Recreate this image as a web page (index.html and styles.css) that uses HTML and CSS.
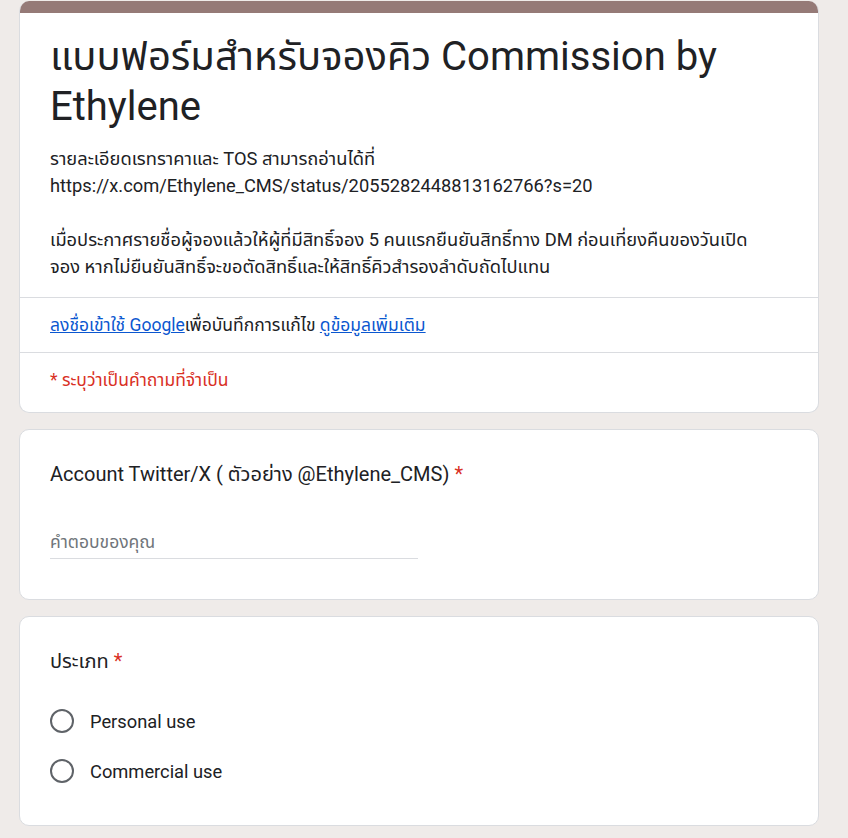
FILE: index.html
```html
<!DOCTYPE html>
<html lang="th">
<head>
  <meta charset="UTF-8" />
  <meta name="viewport" content="width=device-width, initial-scale=1.0"/>
  <title>แบบฟอร์มสำหรับจองคิว Commission by Ethylene</title>
  <link rel="stylesheet" href="styles.css">
</head>
<body>
  <div class="form">
    <div class="card header-card">
      <div class="header-bar"></div>
      <div class="header-main">
        <h1 class="form-title">แบบฟอร์มสำหรับจองคิว Commission by Ethylene</h1>
        <div class="form-desc">
          รายละเอียดเรทราคาและ TOS สามารถอ่านได้ที่<br>
          https://x.com/Ethylene_CMS/status/2055282448813162766?s=20<br>
          <br>
          เมื่อประกาศรายชื่อผู้จองแล้วให้ผู้ที่มีสิทธิ์จอง 5 คนแรกยืนยันสิทธิ์ทาง DM ก่อนเที่ยงคืนของวันเปิด<br>จอง หากไม่ยืนยันสิทธิ์จะขอตัดสิทธิ์และให้สิทธิ์คิวสำรองลำดับถัดไปแทน
        </div>
      </div>
      <div class="header-row signin-row">
        <a href="#">ลงชื่อเข้าใช้ Google</a>เพื่อบันทึกการแก้ไข <a href="#">ดูข้อมูลเพิ่มเติม</a>
      </div>
      <div class="header-row required-row">* ระบุว่าเป็นคำถามที่จำเป็น</div>
    </div>

    <div class="card question-card">
      <div class="question-title">Account Twitter/X ( ตัวอย่าง @Ethylene_CMS) <span class="star">*</span></div>
      <input class="answer-input" type="text" placeholder="คำตอบของคุณ">
    </div>

    <div class="card question-card">
      <div class="question-title">ประเภท <span class="star">*</span></div>
      <div class="options">
        <label class="option">
          <span class="radio"></span>
          <span class="option-label">Personal use</span>
        </label>
        <label class="option">
          <span class="radio"></span>
          <span class="option-label">Commercial use</span>
        </label>
      </div>
    </div>
  </div>
</body>
</html>
```

FILE: styles.css
```css
body {
  margin: 0;
  background-color: #efebe9;
  font-family: Roboto, "Noto Sans Thai", "Noto Sans", "Liberation Sans", sans-serif;
  color: #202124;
}

.form {
  width: 800px;
  padding: 1px 0 20px 19px;
}

.card {
  background-color: #fff;
  border: 1px solid #dadce0;
  border-radius: 10px;
  margin-bottom: 16px;
  overflow: hidden;
}

/* header card */
.header-card {
  border-top: none;
}

.header-bar {
  height: 12px;
  background-color: #957a77;
}

.header-main {
  padding: 19px 30px 17px;
  border-bottom: 1px solid #dadce0;
}

.form-title {
  margin: 0;
  font-size: 40px;
  font-weight: 400;
  line-height: 50px;
}

.form-desc {
  margin-top: 13px;
  font-size: 18.3px;
  line-height: 27px;
}

.header-row {
  padding: 0 30px;
  font-size: 17.5px;
}

.signin-row {
  line-height: 54px;
  border-bottom: 1px solid #dadce0;
}

.signin-row a {
  color: #0b57d0;
}

.required-row {
  line-height: 55px;
  padding-bottom: 4px;
  color: #d93025;
}

/* questions */
.question-card {
  padding: 29px 30px 29px;
}

.question-title {
  font-size: 20px;
  line-height: 30px;
}

.star {
  color: #d93025;
}

.answer-input {
  display: block;
  width: 368px;
  margin-top: 29px;
  margin-bottom: 11px;
  padding: 12px 0 4px;
  border: none;
  border-bottom: 1px solid #dadce0;
  outline: none;
  font-family: inherit;
  font-size: 17.5px;
  line-height: 24px;
  color: #202124;
}

.answer-input::placeholder {
  color: #70757a;
}

.options {
  margin-top: 20px;
}

.option {
  display: flex;
  align-items: center;
  height: 50px;
  gap: 16px;
  cursor: pointer;
}

.radio {
  width: 20px;
  height: 20px;
  border: 2px solid #5f6368;
  border-radius: 50%;
}

.option-label {
  font-size: 18.3px;
}
```
